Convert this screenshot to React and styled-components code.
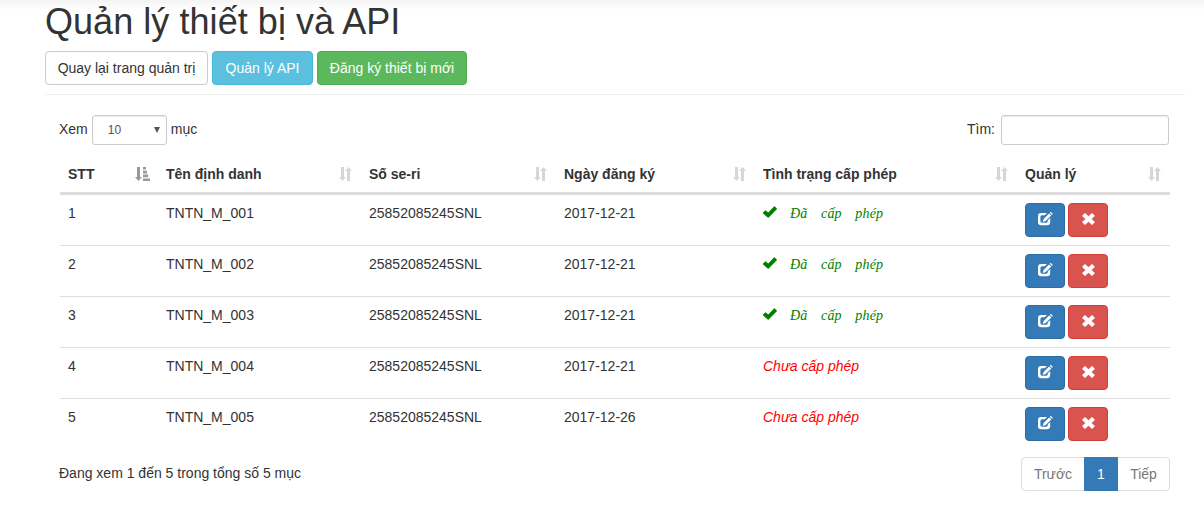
import React from 'react';
import styled, { createGlobalStyle, css } from 'styled-components';

const GlobalStyle = createGlobalStyle`
  * { box-sizing: border-box; }
  body {
    margin: 0;
    background: #fff;
    color: #333;
    font: 14px/20px "Liberation Sans", Arial, sans-serif;
    overflow: hidden;
  }
`;

const Page = styled.main`
  height: 518px;
  padding: 2px 19px 0 45px;
  background: linear-gradient(#f4f4f4, #fff 10px);
`;

const Title = styled.h1`
  margin: 0 0 9px;
  font-size: 36px;
  font-weight: 400;
  line-height: 40px;
  letter-spacing: 0.05px;
`;

const Toolbar = styled.div`
  display: flex;
  gap: 4px;
  padding-bottom: 9px;
  border-bottom: 1px solid #eee;
`;

const tones = {
  plain: ['#fff', '#ccc', '#333'],
  info: ['#5bc0de', '#46b8da', '#fff'],
  success: ['#5cb85c', '#4cae4c', '#fff'],
  primary: ['#337ab7', '#2e6da4', '#fff'],
  danger: ['#d9534f', '#d43f3a', '#fff'],
};

const Button = styled.button`
  display: flex;
  align-items: center;
  justify-content: center;
  width: ${(p) => p.$width}px;
  height: 34px;
  padding: 0 0 ${(p) => (p.$icon ? 2 : 0)}px;
  border: 1px solid ${(p) => tones[p.$tone][1]};
  border-radius: 4px;
  background: ${(p) => tones[p.$tone][0]};
  color: ${(p) => tones[p.$tone][2]};
  font: inherit;
  white-space: nowrap;
`;

const Panel = styled.section`
  padding: 20px 15px 0;
  width: 1140px;
`;

const Controls = styled.div`
  display: flex;
  align-items: center;
  justify-content: space-between;
  height: 30px;
  margin-left: -1px;
  padding-right: 1px;
`;

const Field = styled.label`
  display: flex;
  align-items: center;
  gap: ${(p) => p.$gap}px;
  height: 28px;
  align-self: flex-start;
`;

const control = css`
  height: 30px;
  margin-top: 2px;
  border: 1px solid #ccc;
  border-radius: 3px;
  background: #fff;
  box-shadow: inset 0 1px 1px rgba(0, 0, 0, 0.075);
`;

const Select = styled.span`
  ${control}
  display: flex;
  align-items: center;
  justify-content: space-between;
  width: 75px;
  padding: 0 6px 0 15px;
  color: #555;
  font-size: 12px;
`;

const SearchInput = styled.input`
  ${control}
  width: 168px;
  outline: 0;
`;

const Table = styled.table`
  width: 1110px;
  margin-top: 10px;
  table-layout: fixed;
  border-collapse: separate;
  border-spacing: 0;
`;

const HeadCell = styled.th`
  width: ${(p) => p.$width}px;
  height: 40px;
  padding: 1px 8px 0;
  border-bottom: 3px solid #ddd;
  text-align: left;
  vertical-align: middle;
`;

const HeadContent = styled.div`
  display: flex;
  align-items: center;
  justify-content: space-between;
  white-space: nowrap;
`;

const Cell = styled.td`
  height: ${(p) => (p.$first ? 50 : 51)}px;
  padding: 8px 8px 0;
  border-top: ${(p) => (p.$first ? 0 : 1)}px solid #ddd;
  vertical-align: top;
  white-space: nowrap;
`;

const Actions = styled.div`
  display: flex;
  gap: 3px;
`;

const Approved = styled.div`
  display: flex;
  align-items: flex-start;
  gap: 13px;
  padding-top: 1px;
  color: green;
  font-family: "Liberation Serif", "Times New Roman", serif;
  font-style: italic;
  letter-spacing: 0.15px;
  word-spacing: 10px;

  svg { margin-top: 2px; }
`;

const Pending = styled.em`
  color: red;
`;

const Footer = styled.footer`
  display: flex;
  justify-content: space-between;
  margin-top: 8px;
  margin-left: -1px;
`;

const Info = styled.div`
  padding-top: 6px;
`;

const Pagination = styled.nav`
  display: flex;
  width: 149px;
  height: 34px;
  border: 1px solid #ddd;
  border-radius: 4px;
`;

const PageItem = styled.span`
  width: ${(p) => p.$width}px;
  margin: -1px 0;
  padding: 7px 0;
  text-align: center;
  color: ${(p) => (p.$active ? '#fff' : '#777')};
  background: ${(p) => (p.$active ? '#337ab7' : 'transparent')};
`;

const Icon = styled.svg`
  display: block;
  flex: none;
  fill: currentColor;
`;

const SortGlyph = styled(Icon)`
  color: ${(p) => (p.$active ? '#999' : '#d6d6d6')};
  margin-right: ${(p) => (p.$active ? 0 : 1)}px;
`;

const SortIcon = () => (
  <SortGlyph width="13" height="14" viewBox="0 0 13 14">
    <path d="M2 0h3v10h2l-3.5 4L0 10h2zM8 14h3V4h2L9.5 0 6 4h2z" />
  </SortGlyph>
);

const SortedIcon = () => (
  <SortGlyph $active width="15" height="14" viewBox="0 0 15 14">
    <path d="M2 0h3v10h2l-3.5 4L0 10h2zM8 0h3v2.6H8zM8 3.8h4v2.6H8zM8 7.6h5.2v2.6H8zM8 11.4h7V14H8z" />
  </SortGlyph>
);

const CheckIcon = () => (
  <Icon width="14" height="12" viewBox="0 0 14 12">
    <path d="M.1 6.6 2.1 4.6q.4-.4.8 0l2.3 2L11 .5q.4-.4.8 0l2 1.9q.4.4 0 .8L5.7 11.5q-.5.4-1 0L.1 7.4q-.4-.4 0-.8z" />
  </Icon>
);

const EditIcon = () => (
  <Icon width="16" height="14" viewBox="0 0 16 14">
    <path d="M4.2.9H10L7.7 3.3H5Q3.4 3.3 3.4 4.9v4.2q0 1.6 1.6 1.6h4.2q1.6 0 1.6-1.6V8.3l2.4-2.4V10q0 3.2-3.2 3.2H4.2Q1 13.2 1 10V4.1Q1 .9 4.2.9z" />
    <path d="m12.1 1.4 2.2 2.2-5.6 5.5-3 .9.9-3zM12.8.7l.6-.6q.3-.3.6 0l1.6 1.6q.3.3 0 .6l-.6.6z" />
  </Icon>
);

const RemoveIcon = () => (
  <Icon width="13" height="12" viewBox="0 0 13 12">
    <path d="M.4 2.6 2.7.2q.3-.3.6 0l3.2 3L9.7.2q.3-.3.6 0l2.3 2.4q.3.3 0 .6L9.6 6l3 2.8q.3.3 0 .6l-2.3 2.4q-.3.3-.6 0l-3.2-3-3.2 3q-.3.3-.6 0L.4 9.4q-.3-.3 0-.6l3-2.8-3-2.8q-.3-.3 0-.6z" />
  </Icon>
);

const Arrow = () => (
  <Icon width="6" height="6" viewBox="0 0 6 6">
    <path d="M0 0h6L3 6z" />
  </Icon>
);

const columns = [
  ['STT', 98],
  ['Tên định danh', 203],
  ['Số se-ri', 195],
  ['Ngày đăng ký', 199],
  ['Tình trạng cấp phép', 262],
  ['Quản lý', 153],
];

const devices = [
  { name: 'TNTN_M_001', date: '2017-12-21', approved: true },
  { name: 'TNTN_M_002', date: '2017-12-21', approved: true },
  { name: 'TNTN_M_003', date: '2017-12-21', approved: true },
  { name: 'TNTN_M_004', date: '2017-12-21', approved: false },
  { name: 'TNTN_M_005', date: '2017-12-26', approved: false },
];

export default function App() {
  return (
    <Page>
      <GlobalStyle />
      <Title>Quản lý thiết bị và API</Title>
      <Toolbar>
        <Button $tone="plain" $width={163}>Quay lại trang quản trị</Button>
        <Button $tone="info" $width={101}>Quản lý API</Button>
        <Button $tone="success" $width={150}>Đăng ký thiết bị mới</Button>
      </Toolbar>
      <Panel>
        <Controls>
          <Field $gap={4}>
            Xem
            <Select>10<Arrow /></Select>
            mục
          </Field>
          <Field $gap={6}>
            Tìm:
            <SearchInput />
          </Field>
        </Controls>
        <Table>
          <thead>
            <tr>
              {columns.map(([label, width], i) => (
                <HeadCell key={label} $width={width}>
                  <HeadContent>
                    {label}
                    {i === 0 ? <SortedIcon /> : <SortIcon />}
                  </HeadContent>
                </HeadCell>
              ))}
            </tr>
          </thead>
          <tbody>
            {devices.map((d, i) => (
              <tr key={d.name}>
                <Cell $first={i === 0}>{i + 1}</Cell>
                <Cell $first={i === 0}>{d.name}</Cell>
                <Cell $first={i === 0}>25852085245SNL</Cell>
                <Cell $first={i === 0}>{d.date}</Cell>
                <Cell $first={i === 0}>
                  {d.approved ? (
                    <Approved><CheckIcon /><span>Đã cấp phép</span></Approved>
                  ) : (
                    <Pending>Chưa cấp phép</Pending>
                  )}
                </Cell>
                <Cell $first={i === 0}>
                  <Actions>
                    <Button $tone="primary" $width={40} $icon><EditIcon /></Button>
                    <Button $tone="danger" $width={40} $icon><RemoveIcon /></Button>
                  </Actions>
                </Cell>
              </tr>
            ))}
          </tbody>
        </Table>
        <Footer>
          <Info>Đang xem 1 đến 5 trong tổng số 5 mục</Info>
          <Pagination>
            <PageItem $width={62}>Trước</PageItem>
            <PageItem $width={34} $active>1</PageItem>
            <PageItem $width={51}>Tiếp</PageItem>
          </Pagination>
        </Footer>
      </Panel>
    </Page>
  );
}
